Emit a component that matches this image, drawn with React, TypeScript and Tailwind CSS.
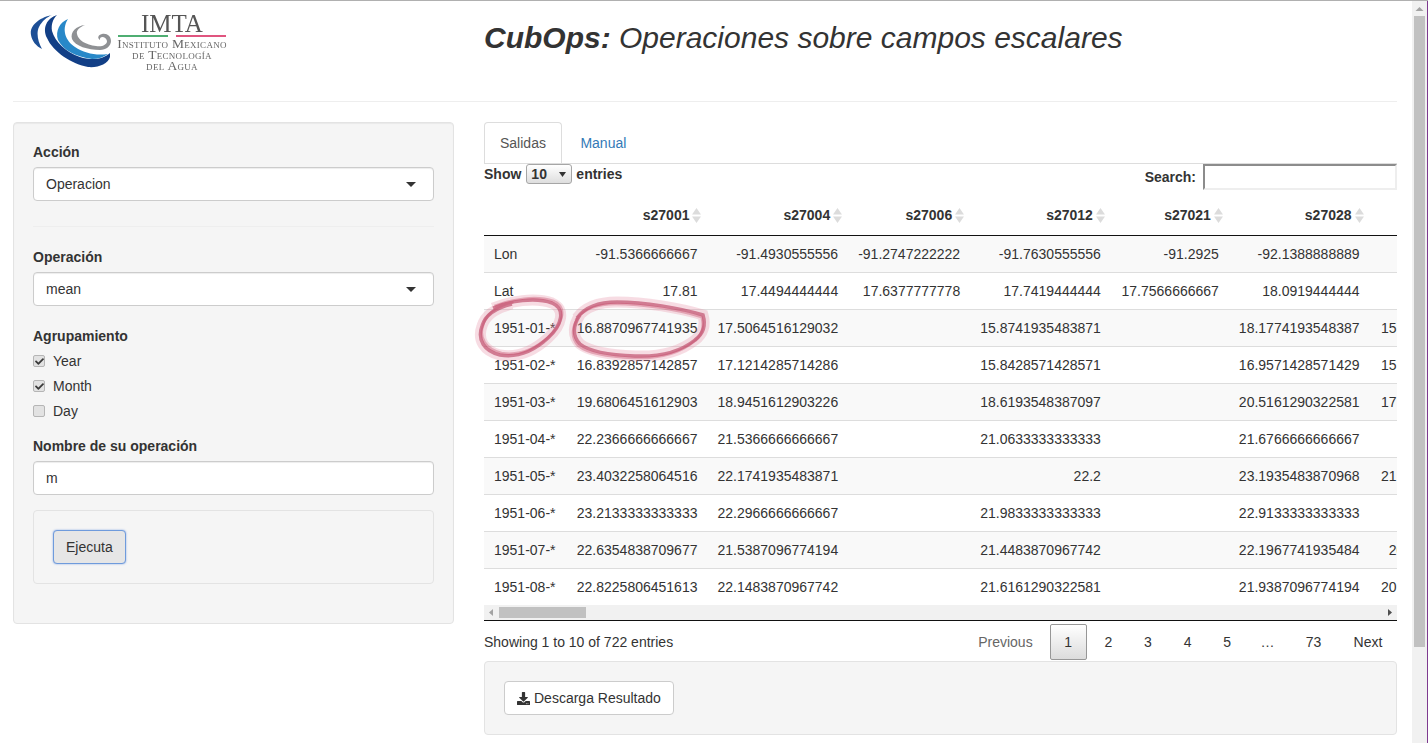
import React from 'react';
import { FaCheck, FaDownload } from 'react-icons/fa';

const rows: string[][] = [
  ['Lon', '-91.5366666667', '-91.4930555556', '-91.2747222222', '-91.7630555556', '-91.2925', '-92.1388888889', ''],
  ['Lat', '17.81', '17.4494444444', '17.6377777778', '17.7419444444', '17.7566666667', '18.0919444444', ''],
  ['1951-01-*', '16.8870967741935', '17.5064516129032', '', '15.8741935483871', '', '18.1774193548387', '15.7419354838710'],
  ['1951-02-*', '16.8392857142857', '17.1214285714286', '', '15.8428571428571', '', '16.9571428571429', '15.5214285714286'],
  ['1951-03-*', '19.6806451612903', '18.9451612903226', '', '18.6193548387097', '', '20.5161290322581', '17.9032258064516'],
  ['1951-04-*', '22.2366666666667', '21.5366666666667', '', '21.0633333333333', '', '21.6766666666667', ''],
  ['1951-05-*', '23.4032258064516', '22.1741935483871', '', '22.2', '', '23.1935483870968', '21.8387096774194'],
  ['1951-06-*', '23.2133333333333', '22.2966666666667', '', '21.9833333333333', '', '22.9133333333333', ''],
  ['1951-07-*', '22.6354838709677', '21.5387096774194', '', '21.4483870967742', '', '22.1967741935484', '20.612903225806'],
  ['1951-08-*', '22.8225806451613', '22.1483870967742', '', '21.6161290322581', '', '21.9387096774194', '20.6774193548387'],
];

const heads = ['s27001', 's27004', 's27006', 's27012', 's27021', 's27028'];
const pages = ['2', '3', '4', '5'];

// the two pen marks drawn over the table
const markLeft = 'M493 308 C510 301 535 297 552 303 C566 309 562 325 548 338 C535 350 518 358 500 355 C484 351 477 340 482 326 C485 316 495 308 512 304';
const markRight = 'M577 318 C585 307 600 302 617 302 C645 302 680 308 703 315 C706 325 703 334 695 340 C680 352 660 357 635 356 C610 355 590 352 580 344 C572 336 573 325 580 315';

const SortIcon = () => (
  <svg width="9" height="15" viewBox="0 0 9 15" className="ml-[3px] inline-block align-[-3px]">
    <path d="M4.5 0 L9 6.5 L0 6.5 Z" fill="#dcdcdc" />
    <path d="M4.5 15 L9 8.5 L0 8.5 Z" fill="#dcdcdc" />
  </svg>
);

const Logo = () => (
  <div className="flex h-[68px] w-[231px] items-start pl-[16px] pt-[12px] blur-[0.3px]">
    <svg width="84" height="56" viewBox="29 13 84 56" className="shrink-0">
      <path d="M52 15 C41 17 29 25 31 35 C32 41 36 46 42 49 C38 42 36 33 39 27 C42 21 47 17 52 15 Z" fill="#1d4f96" />
      <path d="M57 15 C47 18 42 28 47 38 C53 52 72 64 88 67 C98 68 108 64 110 57 L110 53 C104 59 92 61 80 57 C66 52 55 42 52 31 C51 24 53 19 57 15 Z" fill="#123f86" />
      <path d="M68 19 C60 22 55 31 58 40 C63 50 76 57 92 59 C98 59 104 57 108 54 C96 56 84 53 75 47 C66 41 61 30 68 19 Z" fill="#2888c8" />
      <path d="M85 25 C76 26 70 32 72 39 C75 46 88 50 100 50 C106 50 111 46 111 41 C111 36 107 33 102 34 C98 35 97 38 100 40 C99 36 106 36 107 41 C107 45 102 47 96 46 C86 45 78 40 77 34 C76 30 80 27 85 25 Z" fill="#8f9194" />
    </svg>
    <div className="flex w-[118px] shrink-0 flex-col items-center font-['Liberation_Serif',serif] text-[#666666]">
      <div className="text-[25px] leading-[22px] text-[#555555]">IMTA</div>
      <div className="flex w-[108px] gap-2">
        <div className="h-[2px] flex-1 bg-[#4fae72]" />
        <div className="h-[2px] flex-1 bg-[#e0557f]" />
      </div>
      <div className="mt-px whitespace-nowrap text-[13.5px] leading-[11px] tracking-[0.3px] [font-variant:small-caps]">Instituto Mexicano</div>
      <div className="whitespace-nowrap text-[13.5px] leading-[11px] tracking-[0.3px] [font-variant:small-caps]">de Tecnología</div>
      <div className="whitespace-nowrap text-[13.5px] leading-[11px] tracking-[0.3px] [font-variant:small-caps]">del Agua</div>
    </div>
  </div>
);

const Selectish = ({ value }: { value: string }) => (
  <div className="flex h-[34px] items-center justify-between rounded border border-[#cccccc] bg-white pl-3 pr-[17px] shadow-[inset_0_1px_1px_rgba(0,0,0,0.075)]">
    <span>{value}</span>
    <svg width="10" height="5" viewBox="0 0 10 5"><path d="M0 0 L10 0 L5 5 Z" fill="#333333" /></svg>
  </div>
);

const Check = ({ label, checked }: { label: string; checked?: boolean }) => (
  <div className="mb-[5px] flex h-5 items-center gap-2">
    <span className="flex h-3 w-3 items-center justify-center rounded-[2px] border border-[#b5b5b5] bg-[#e2e2e2]">
      {checked && <FaCheck className="text-[9px] text-[#3a3a3a]" />}
    </span>
    <span>{label}</span>
  </div>
);

const Sidebar = () => (
  <div className="h-[502px] w-[441px] shrink-0 rounded border border-[#e3e3e3] bg-[#f5f5f5] px-[19px] pt-[19px] shadow-[inset_0_1px_1px_rgba(0,0,0,0.05)]">
    <div className="mb-[5px] font-bold">Acción</div>
    <Selectish value="Operacion" />
    <div className="mb-5 mt-[25px] h-px bg-[#eeeeee]" />
    <div className="mb-[5px] mt-[10px] font-bold">Operación</div>
    <Selectish value="mean" />
    <div className="mb-[5px] mt-5 font-bold">Agrupamiento</div>
    <Check label="Year" checked />
    <Check label="Month" checked />
    <Check label="Day" />
    <div className="mb-[5px] mt-[15px] font-bold">Nombre de su operación</div>
    <div className="flex h-[34px] items-center rounded border border-[#cccccc] bg-white px-3 shadow-[inset_0_1px_1px_rgba(0,0,0,0.075)]">m</div>
    <div className="mt-[15px] h-[74px] rounded border border-[#e3e3e3] bg-[#f5f5f5] p-[19px]">
      <button className="h-[34px] rounded border border-[#6f9bdc] bg-[#e6e6e6] px-3 text-[#333333] shadow-[0_0_2px_rgba(80,130,220,0.7)]">Ejecuta</button>
    </div>
  </div>
);

const ResultTable = () => (
  <div className="mt-[7px] overflow-hidden">
    <table className="w-[1027.6px] table-fixed border-separate border-spacing-0 whitespace-nowrap">
      <colgroup>
        <col className="w-[82.8px]" />
        <col className="w-[140.7px]" />
        <col className="w-[140.7px]" />
        <col className="w-[122px]" />
        <col className="w-[140.7px]" />
        <col className="w-[118px]" />
        <col className="w-[140.7px]" />
        <col className="w-[142px]" />
      </colgroup>
      <thead>
        <tr>
          <th className="h-[39px] border-b border-[#111111]" />
          {heads.map((h) => (
            <th key={h} className="h-[39px] border-b border-[#111111] pb-[3px] pl-[10px] pr-[6px] text-right font-bold">
              {h}
              <SortIcon />
            </th>
          ))}
          <th className="h-[39px] border-b border-[#111111]" />
        </tr>
      </thead>
      <tbody>
        {rows.map((r, i) => (
          <tr key={r[0]} className={i % 2 === 0 ? 'bg-[#f9f9f9]' : 'bg-white'}>
            {r.map((c, j) => (
              <td
                key={j}
                className={`overflow-hidden px-[10px] ${i === 0 ? 'h-[36px]' : 'h-[37px] border-t border-[#dddddd]'} ${j === 0 ? 'text-left' : 'text-right'}`}
              >
                {c}
              </td>
            ))}
          </tr>
        ))}
      </tbody>
    </table>
  </div>
);

const HScrollbar = () => (
  <div className="flex h-[15px] items-center bg-[#f1f1f1]">
    <svg width="15" height="15" viewBox="0 0 15 15" className="shrink-0"><path d="M5 7.5 L9 4 L9 11 Z" fill="#a3a3a3" /></svg>
    <div className="h-[11px] w-[87px] bg-[#c1c1c1]" />
    <div className="flex-1" />
    <svg width="15" height="15" viewBox="0 0 15 15" className="shrink-0"><path d="M10 7.5 L6 4 L6 11 Z" fill="#505050" /></svg>
  </div>
);

const Pagination = () => (
  <div className="flex items-center">
    <span className="pl-3 text-[#666666]">Previous</span>
    <span className="ml-[17px] mr-[2px] flex h-[36px] w-[37px] items-center justify-center rounded-[2px] border border-[#979797] bg-gradient-to-b from-white to-[#dcdcdc] text-[#333333]">1</span>
    {pages.map((p) => (
      <span key={p} className="w-[39.6px] text-center">{p}</span>
    ))}
    <span className="w-[41px] text-center">…</span>
    <span className="w-[51px] text-center">73</span>
    <span className="w-[58px] text-center">Next</span>
  </div>
);

const Main = () => (
  <div className="ml-[30px] min-w-0 flex-1">
    <div className="flex h-[41px] items-end">
      <div className="flex h-[41px] items-center rounded-t border border-b-0 border-[#dddddd] bg-white px-[15px] text-[#555555]">Salidas</div>
      <div className="flex h-[41px] items-center px-[18.5px] text-[#337ab7]">Manual</div>
    </div>
    <div className="h-px bg-[#dddddd]" />
    <div className="flex items-start justify-between">
      <div className="flex h-5 items-center font-bold">
        Show
        <span className="ml-[5px] mr-1 flex h-5 w-[46px] items-center justify-between rounded-[3px] border border-[#a6a6a6] bg-gradient-to-b from-white to-[#dedede] pl-1 pr-[5px]">
          10
          <svg width="7" height="5" viewBox="0 0 7 5"><path d="M0 0 L7 0 L3.5 5 Z" fill="#333333" /></svg>
        </span>
        entries
      </div>
      <div className="flex items-center font-bold">
        Search:
        <div className="ml-[7px] h-[26px] w-[194px] border-2 border-b-[#eeeeee] border-l-[#8c8c8c] border-r-[#eeeeee] border-t-[#8c8c8c] bg-white" />
      </div>
    </div>
    <ResultTable />
    <HScrollbar />
    <div className="h-px bg-[#111111]" />
    <div className="flex h-[40px] items-center justify-between pt-px">
      <span>Showing 1 to 10 of 722 entries</span>
      <Pagination />
    </div>
    <div className="h-[74px] rounded border border-[#e3e3e3] bg-[#f5f5f5] p-[19px]">
      <button className="flex h-[34px] items-center gap-[4px] rounded border border-[#cccccc] bg-white px-3 text-[#333333]">
        <FaDownload className="text-[13px]" /> Descarga Resultado
      </button>
    </div>
  </div>
);

export default function App() {
  return (
    <div className="relative h-[743px] overflow-hidden border-t border-[#b0b0b0] bg-white font-['Liberation_Sans',Arial,sans-serif] text-[14px] leading-5 text-[#333333]">
      <div className="flex h-full">
        <div className="min-w-0 flex-1 pl-[13px] pr-[15px]">
          <div className="flex h-[101px] border-b border-[#eeeeee]">
            <Logo />
            <h1 className="ml-[240px] mt-5 text-[30px] font-normal italic leading-[33px] text-[#333333]">
              <b>CubOps:</b> Operaciones sobre campos escalares
            </h1>
          </div>
          <div className="mt-5 flex">
            <Sidebar />
            <Main />
          </div>
        </div>
        <div className="flex w-[16px] shrink-0 flex-col border-r border-r-[#7e3a8f] bg-[#f1f1f1]">
          <svg width="15" height="15" viewBox="0 0 15 15" className="shrink-0"><path d="M3.5 10 L7.5 6 L11.5 10 Z" fill="#a3a3a3" /></svg>
          <div className="ml-[2px] mr-[2px] h-[631px] bg-[#c1c1c1]" />
        </div>
      </div>
      <svg width="250" height="85" viewBox="470 285 250 85" className="pointer-events-none absolute left-[470px] top-[284px] blur-[0.7px]" fill="none">
        <path d={markLeft} stroke="#e58aa2" strokeOpacity="0.3" strokeWidth="11" />
        <path d={markLeft} stroke="#b83a5c" strokeOpacity="0.6" strokeWidth="3.5" />
        <path d={markLeft} stroke="#c9506f" strokeOpacity="0.4" strokeWidth="2.5" transform="translate(1.5 -2)" />
        <path d={markRight} stroke="#e58aa2" strokeOpacity="0.3" strokeWidth="11" />
        <path d={markRight} stroke="#b83a5c" strokeOpacity="0.6" strokeWidth="3.5" />
        <path d={markRight} stroke="#c9506f" strokeOpacity="0.4" strokeWidth="2.5" transform="translate(-1.5 2)" />
      </svg>
    </div>
  );
}
